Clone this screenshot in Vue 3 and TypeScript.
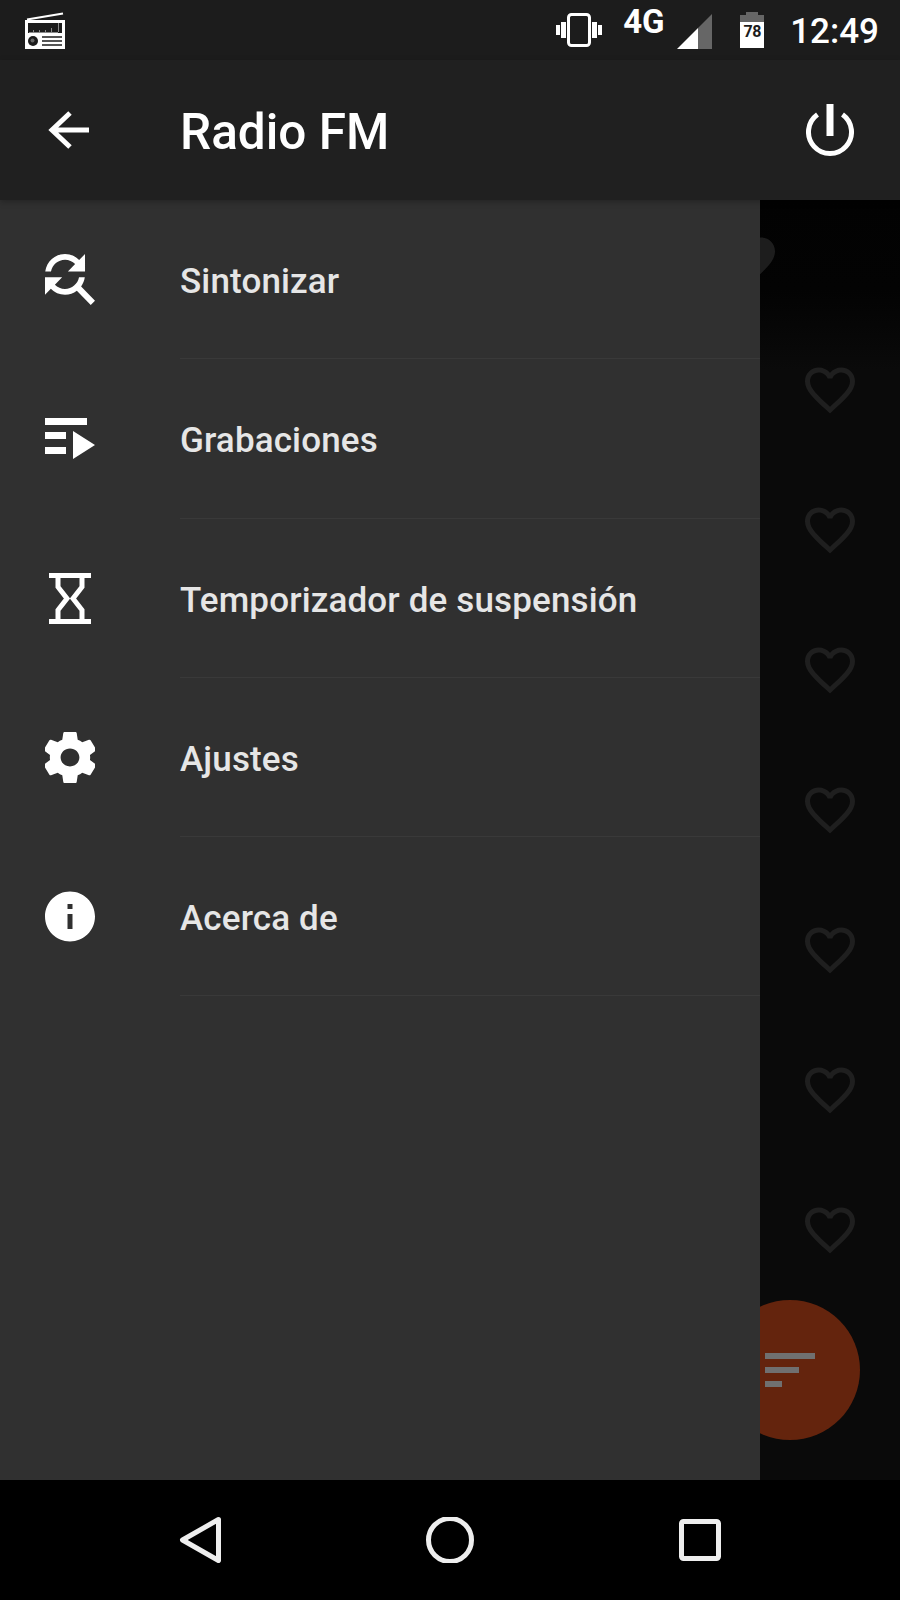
<script setup lang="ts">
const hearts: number[] = [1, 2, 3, 4, 5, 6, 7]
const heartPath =
  'M16.5 3c-1.74 0-3.41.81-4.5 2.09C10.91 3.81 9.24 3 7.5 3 4.42 3 2 5.42 2 8.5c0 3.78 3.4 6.86 8.55 11.54L12 21.35l1.45-1.32C18.6 15.36 22 12.28 22 8.5 22 5.42 19.58 3 16.5 3zm-4.4 15.55l-.1.1-.1-.1C7.14 14.24 4 11.39 4 8.5 4 6.5 5.5 5 7.5 5c1.54 0 3.04.99 3.57 2.36h1.87C13.46 5.99 14.96 5 16.5 5c2 0 3.5 1.5 3.5 3.5 0 2.89-3.14 5.74-7.9 10.05z'
</script>

<template>
  <div class="phone">
    <header class="status">
      <svg class="radio" width="40" height="37" viewBox="0 0 40 37">
        <path d="M2 7.5 38 1.5" stroke="#fff" stroke-width="2" />
        <path fill="#fff" fill-rule="evenodd" d="M0 8h40v29H0zM3 11v10h34V11z" />
        <path fill="#8a8a8a" d="M4 20h29v1H4zM8 18h1v2H8zM14 18h1v2h-1zM20 18h1v2h-1zM26 16h1v4h-1zM33 11h1v9h-1z" />
        <circle cx="8" cy="29" r="5" fill="#1c1c1c" />
        <circle cx="7.5" cy="28.5" r="2" fill="#666" />
        <path d="M17 25h20M17 29h20M17 33h20" stroke="#1c1c1c" stroke-width="1.4" />
      </svg>
      <div class="status-right">
        <svg class="vib" width="46" height="34" viewBox="0 0 46 34">
          <rect x="12.5" y="1.5" width="21" height="31" rx="3" fill="none" stroke="#fff" stroke-width="3" />
          <path fill="#fff" d="M0 12h4v10H0zM5 9h5v16H5zM36 9h5v16h-5zM42 12h4v10h-4z" />
        </svg>
        <span class="net">4G</span>
        <svg class="signal" width="35" height="35" viewBox="0 0 35 35">
          <path fill="#666" d="M35 0v35H21V14z" />
          <path fill="#fff" d="M0 35 21 14v21z" />
        </svg>
        <div class="battery">
          <span class="nub"></span>
          <span class="cap"></span>
          <span class="cell">78</span>
        </div>
        <span class="clock">12:49</span>
      </div>
    </header>

    <div class="appbar">
      <svg class="back" width="41" height="38" viewBox="0 0 41 38">
        <path d="M41 19H4M22 2 4 19l18 17" fill="none" stroke="#fff" stroke-width="5" />
      </svg>
      <h1 class="title">Radio FM</h1>
      <svg class="power" width="48" height="52" viewBox="0 0 48 52">
        <path d="M11.500 10.500a21.500 21.500 0 1 0 25 0" fill="none" stroke="#fff" stroke-width="5" />
        <rect x="20.500" y="0" width="7" height="32" fill="#fff" />
      </svg>
    </div>

    <main class="stage">
      <div class="backdrop">
        <div class="head-row">
          <svg width="60" height="60" viewBox="0 0 24 24">
            <path fill="#1d1d1d" d="M12 21.350l-1.450-1.320C5.400 15.360 2 12.280 2 8.500 2 5.420 4.420 3 7.500 3c1.740 0 3.410.81 4.500 2.090C13.090 3.810 14.760 3 16.500 3 19.580 3 22 5.420 22 8.500c0 3.780-3.400 6.860-8.550 11.540z" />
          </svg>
        </div>
        <div class="list">
          <div v-for="h in hearts" :key="h" class="row">
            <svg width="60" height="60" viewBox="0 0 24 24"><path fill="#1f1f1f" :d="heartPath" /></svg>
          </div>
        </div>
        <div class="fab">
          <span class="fl l1"></span>
          <span class="fl l2"></span>
          <span class="fl l3"></span>
        </div>
      </div>

      <nav class="drawer">
        <div class="item">
          <span class="slot">
            <svg width="50" height="51" viewBox="4 4 17.490 17.490" preserveAspectRatio="none"><path fill="#fff" d="M11 6c1.380 0 2.630.56 3.540 1.460L12 10h6V4l-2.050 2.050C14.680 4.780 12.930 4 11 4c-3.530 0-6.430 2.610-6.920 6H6.100c.46-2.280 2.480-4 4.900-4zm5.640 9.140c.66-.9 1.120-1.970 1.280-3.140H15.900c-.46 2.280-2.480 4-4.900 4-1.380 0-2.630-.56-3.540-1.460L10 12H4v6l2.050-2.050C7.320 17.220 9.070 18 11 18c1.550 0 2.980-.51 4.140-1.360L20 21.490 21.490 20l-4.850-4.860z" /></svg>
          </span>
          <span class="label">Sintonizar</span>
        </div>
        <div class="item">
          <span class="slot">
            <svg width="50" height="41" viewBox="0 0 50 41"><path fill="#fff" d="M0 0h42v7H0zM0 14h21v7H0zM0 29h21v7H0zM28 13l22 14-22 14z" /></svg>
          </span>
          <span class="label">Grabaciones</span>
        </div>
        <div class="item">
          <span class="slot">
            <svg width="42" height="51" viewBox="0 0 42 51">
              <path fill="#fff" d="M0 0h42v5H0zM0 46h42v5H0z" />
              <path fill="none" stroke="#fff" stroke-width="5" d="M9 4v10l9 11.500L9 37v10M33 4v10l-9 11.500L33 37v10" />
            </svg>
          </span>
          <span class="label">Temporizador de suspensión</span>
        </div>
        <div class="item">
          <span class="slot">
            <svg width="50" height="51" viewBox="2.700 2 18.600 20" preserveAspectRatio="none"><path fill="#fff" d="M19.430 12.980c.04-.32.07-.64.07-.98s-.03-.66-.07-.98l2.110-1.650c.19-.15.24-.42.12-.64l-2-3.460c-.12-.22-.39-.3-.61-.22l-2.490 1c-.52-.4-1.080-.73-1.690-.98l-.38-2.650C14.460 2.180 14.250 2 14 2h-4c-.25 0-.46.18-.49.42l-.38 2.650c-.61.25-1.170.59-1.690.98l-2.490-1c-.23-.09-.49 0-.61.22l-2 3.460c-.13.22-.07.49.12.64l2.110 1.650c-.04.32-.07.65-.07.98s.03.66.07.98l-2.110 1.650c-.19.15-.24.42-.12.64l2 3.460c.12.22.39.3.61.22l2.490-1c.52.4 1.080.73 1.690.98l.38 2.650c.03.24.24.42.49.42h4c.25 0 .46-.18.49-.42l.38-2.650c.61-.25 1.170-.59 1.690-.98l2.490 1c.23.09.49 0 .61-.22l2-3.460c.12-.22.07-.49-.12-.64l-2.110-1.650zM12 15.500c-1.930 0-3.500-1.570-3.500-3.500s1.570-3.500 3.500-3.500 3.500 1.570 3.500 3.500-1.570 3.500-3.500 3.500z" /></svg>
          </span>
          <span class="label">Ajustes</span>
        </div>
        <div class="item">
          <span class="slot">
            <svg width="51" height="51" viewBox="2 2 20 20"><path fill="#fff" d="M12 2C6.480 2 2 6.480 2 12s4.480 10 10 10 10-4.480 10-10S17.520 2 12 2zm1 15h-2v-6h2v6zm0-8h-2V7h2v2z" /></svg>
          </span>
          <span class="label">Acerca de</span>
        </div>
      </nav>
    </main>

    <footer class="nav">
      <svg width="50" height="46" viewBox="0 0 50 46">
        <path d="M43.500 2.500 7.500 23l36 20.500z" fill="none" stroke="#eee" stroke-width="5" stroke-linejoin="round" />
      </svg>
      <svg width="50" height="46" viewBox="0 0 50 46">
        <circle cx="25" cy="23" r="21.500" fill="none" stroke="#eee" stroke-width="5" />
      </svg>
      <svg width="50" height="46" viewBox="0 0 50 46">
        <rect x="6.500" y="4.500" width="37" height="37" rx="2" fill="none" stroke="#eee" stroke-width="5" />
      </svg>
    </footer>
  </div>
</template>

<style>
html,
body {
  margin: 0;
  background: #000;
}
</style>

<style scoped>
.phone {
  width: 900px;
  height: 1600px;
  display: flex;
  flex-direction: column;
  font-family: Roboto, "Liberation Sans", sans-serif;
  overflow: hidden;
}
.status {
  height: 60px;
  flex: none;
  background: #1c1c1c;
  display: flex;
  align-items: center;
  justify-content: space-between;
  padding: 0 21px 0 25px;
  color: #fff;
}
.radio {
  margin-top: 1px;
}
.status-right {
  display: flex;
  align-items: center;
}
.net {
  font-size: 33px;
  font-weight: 700;
  line-height: 34px;
  margin: -16px 0 0 21px;
  width: 43px;
}
.signal {
  margin: 3px 0 0 11px;
}
.battery {
  display: flex;
  flex-direction: column;
  align-items: center;
  width: 24px;
  margin: 0 0 0 28px;
  height: 36px;
}
.nub {
  width: 12px;
  height: 3px;
  background: #666;
}
.cap {
  width: 24px;
  height: 7px;
  background: #666;
}
.cell {
  width: 24px;
  height: 26px;
  background: #fff;
  color: #1c1c1c;
  font-size: 16px;
  font-weight: 700;
  line-height: 20px;
  text-align: center;
  letter-spacing: -0.5px;
}
.clock {
  font-size: 35px;
  font-weight: 500;
  margin: 3px 0 0 26px;
  line-height: 57px;
}
.appbar {
  height: 140px;
  flex: none;
  background: #202020;
  display: flex;
  align-items: center;
  box-shadow: 0 2px 6px rgba(0, 0, 0, 0.25);
  position: relative;
  z-index: 2;
}
.back {
  margin: -1px 0 0 48px;
}
.title {
  margin: 3px 0 0 91px;
  flex: 1;
  font-size: 49.5px;
  font-weight: 500;
  color: #fff;
  line-height: 60px;
}
.power {
  margin: 0 46px 0 0;
}
.stage {
  flex: 1;
  position: relative;
  min-height: 0;
}
.backdrop {
  height: 100%;
  background: linear-gradient(#020202 0, #030303 90px, #0a0a0a 170px);
  position: relative;
}
.head-row {
  height: 120px;
  padding-left: 720px;
  display: flex;
  align-items: center;
}
.row {
  height: 140px;
  display: flex;
  align-items: center;
  justify-content: flex-end;
  padding-right: 40px;
}
.fab {
  position: absolute;
  left: 720px;
  top: 1100px;
  width: 140px;
  height: 140px;
  border-radius: 50%;
  background: #64240d;
}
.fl {
  position: absolute;
  left: 45px;
  height: 6px;
  background: #707070;
}
.l1 {
  top: 53px;
  width: 50px;
}
.l2 {
  top: 67px;
  width: 34px;
}
.l3 {
  top: 81px;
  width: 17px;
}
.drawer {
  position: absolute;
  left: 0;
  top: 0;
  bottom: 0;
  width: 760px;
  background: #303030;
}
.item {
  height: 159.25px;
  display: flex;
  align-items: center;
}
.slot {
  width: 50px;
  margin-left: 45px;
  margin-right: 85px;
  display: flex;
  justify-content: center;
  flex: none;
}
.label {
  flex: 1;
  align-self: stretch;
  display: flex;
  align-items: center;
  box-sizing: border-box;
  border-bottom: 1px solid #393939;
  padding-top: 5px;
  color: #e6e6e6;
  font-size: 35px;
  font-weight: 500;
  letter-spacing: 0.14px;
}
.nav {
  height: 120px;
  flex: none;
  background: #000;
  display: flex;
  align-items: center;
  justify-content: center;
  gap: 200px;
}
</style>
